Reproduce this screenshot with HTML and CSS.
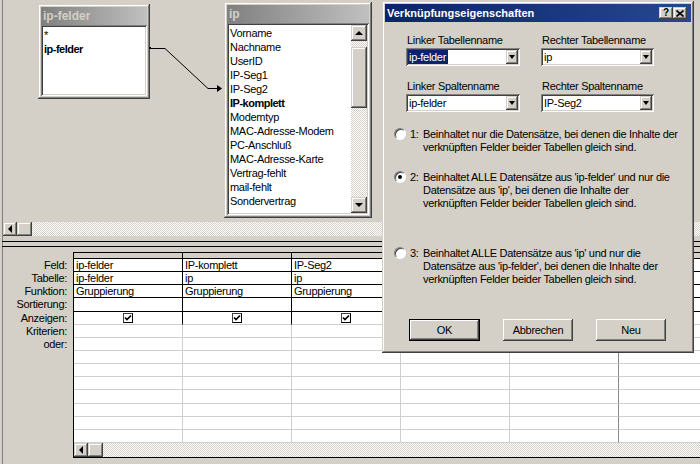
FILE: index.html
```html
<!DOCTYPE html>
<html>
<head>
<meta charset="utf-8">
<title>Abfrage</title>
<link rel="stylesheet" href="styles.css">
</head>
<body>
<div class="app">
  <div class="upper">
    <div class="canvas">
      <div class="tbl tbl-felder">
        <div class="tbl-title">ip-felder</div>
        <div class="tbl-list">
          <div class="fld">*</div>
          <div class="fld b">ip-felder</div>
        </div>
      </div>
      <svg class="link" width="230" height="100" viewBox="0 0 230 100">
        <rect x="149" y="47" width="2" height="2" fill="#000"/>
        <path d="M150 48.5 H165 L208 88.5 H218" fill="none" stroke="#000" stroke-width="1"/>
        <polygon points="217,85 222,88.5 217,92" fill="#000"/>
      </svg>
      <div class="tbl tbl-ip">
        <div class="tbl-title">ip</div>
        <div class="tbl-body">
          <div class="tbl-list">
            <div class="fld">Vorname</div>
            <div class="fld">Nachname</div>
            <div class="fld">UserID</div>
            <div class="fld">IP-Seg1</div>
            <div class="fld">IP-Seg2</div>
            <div class="fld b">IP-komplett</div>
            <div class="fld">Modemtyp</div>
            <div class="fld">MAC-Adresse-Modem</div>
            <div class="fld">PC-Anschluß</div>
            <div class="fld">MAC-Adresse-Karte</div>
            <div class="fld">Vertrag-fehlt</div>
            <div class="fld">mail-fehlt</div>
            <div class="fld">Sondervertrag</div>
          </div>
          <div class="vscroll">
            <div class="sbtn sq"><span class="tri-up"></span></div>
            <div class="vtrack"><div class="vthumb"></div></div>
            <div class="sbtn sq"><span class="tri-down"></span></div>
          </div>
        </div>
      </div>
    </div>
    <div class="hscroll up-h">
      <div class="sbtn"><span class="tri-left"></span></div>
      <div class="hthumb"></div>
      <div class="htrack"></div>
    </div>
  </div>

  <div class="splitter"><div class="sline"></div><div class="sline gap"></div></div>

  <div class="lower">
    <div class="labels">
      <div class="lab">Feld:</div>
      <div class="lab">Tabelle:</div>
      <div class="lab">Funktion:</div>
      <div class="lab">Sortierung:</div>
      <div class="lab">Anzeigen:</div>
      <div class="lab">Kriterien:</div>
      <div class="lab">oder:</div>
    </div>
    <div class="qgrid">
      <div class="cells">
        <div class="c hd"></div><div class="c hd"></div><div class="c hd"></div><div class="c hd"></div><div class="c hd"></div><div class="c hd"></div>

        <div class="c k">ip-felder</div><div class="c k">IP-komplett</div><div class="c k">IP-Seg2</div><div class="c k"></div><div class="c k"></div><div class="c k"></div>
        <div class="c k">ip-felder</div><div class="c k">ip</div><div class="c k">ip</div><div class="c k"></div><div class="c k"></div><div class="c k"></div>
        <div class="c k">Gruppierung</div><div class="c k">Gruppierung</div><div class="c k">Gruppierung</div><div class="c k"></div><div class="c k"></div><div class="c k"></div>
        <div class="c k"></div><div class="c k"></div><div class="c k"></div><div class="c k"></div><div class="c k"></div><div class="c k"></div>
        <div class="c k5 ck"><span class="chk"><svg width="8" height="8" viewBox="0 0 8 8"><path d="M1 3.5 L3 5.5 L7 1.5" fill="none" stroke="#000" stroke-width="1.7"/></svg></span></div>
        <div class="c k5 ck"><span class="chk"><svg width="8" height="8" viewBox="0 0 8 8"><path d="M1 3.5 L3 5.5 L7 1.5" fill="none" stroke="#000" stroke-width="1.7"/></svg></span></div>
        <div class="c k5 ck"><span class="chk"><svg width="8" height="8" viewBox="0 0 8 8"><path d="M1 3.5 L3 5.5 L7 1.5" fill="none" stroke="#000" stroke-width="1.7"/></svg></span></div>
        <div class="c k5"></div><div class="c k5"></div><div class="c k5"></div>

        <div class="c"></div><div class="c"></div><div class="c"></div><div class="c"></div><div class="c c5"></div><div class="c"></div>
        <div class="c"></div><div class="c"></div><div class="c"></div><div class="c"></div><div class="c c5"></div><div class="c"></div>
        <div class="c"></div><div class="c"></div><div class="c"></div><div class="c"></div><div class="c c5"></div><div class="c"></div>
        <div class="c"></div><div class="c"></div><div class="c"></div><div class="c"></div><div class="c c5"></div><div class="c"></div>
        <div class="c"></div><div class="c"></div><div class="c"></div><div class="c"></div><div class="c c5"></div><div class="c"></div>
        <div class="c"></div><div class="c"></div><div class="c"></div><div class="c"></div><div class="c c5"></div><div class="c"></div>
        <div class="c"></div><div class="c"></div><div class="c"></div><div class="c"></div><div class="c c5"></div><div class="c"></div>
        <div class="c"></div><div class="c"></div><div class="c"></div><div class="c"></div><div class="c c5"></div><div class="c"></div>
        <div class="c"></div><div class="c"></div><div class="c"></div><div class="c"></div><div class="c c5"></div><div class="c"></div>
      </div>
      <div class="hscroll">
        <div class="sbtn"><span class="tri-left"></span></div>
        <div class="hthumb"></div>
        <div class="htrack"></div>
      </div>
    </div>
  </div>

  <div class="dialog">
    <div class="titlebar">
      <span class="title">Verknüpfungseigenschaften</span>
      <div class="capbtns">
        <span class="capbtn">?</span>
        <span class="capbtn"><svg width="8" height="7" viewBox="0 0 8 7"><path d="M0.5 0.5 L7.5 6.5 M7.5 0.5 L0.5 6.5" stroke="#000" stroke-width="1.6" fill="none"/></svg></span>
      </div>
    </div>
    <div class="dlg-body">
      <div class="combos">
        <div class="cgroup">
          <div class="clabel">Linker Tabellenname</div>
          <div class="combo"><span class="cval sel">ip-felder</span><span class="dd"><span class="tri-down"></span></span></div>
        </div>
        <div class="cgroup">
          <div class="clabel">Rechter Tabellenname</div>
          <div class="combo"><span class="cval">ip</span><span class="dd"><span class="tri-down"></span></span></div>
        </div>
        <div class="cgroup">
          <div class="clabel">Linker Spaltenname</div>
          <div class="combo"><span class="cval">ip-felder</span><span class="dd"><span class="tri-down"></span></span></div>
        </div>
        <div class="cgroup">
          <div class="clabel">Rechter Spaltenname</div>
          <div class="combo"><span class="cval">IP-Seg2</span><span class="dd"><span class="tri-down"></span></span></div>
        </div>
      </div>
      <div class="options">
        <div class="opt o1">
          <span class="radio"></span><span class="onum">1:</span>
          <span class="otext">Beinhaltet nur die Datensätze, bei denen die Inhalte der<br>verknüpften Felder beider Tabellen gleich sind.</span>
        </div>
        <div class="opt o2">
          <span class="radio on"></span><span class="onum">2:</span>
          <span class="otext">Beinhaltet ALLE Datensätze aus 'ip-felder' und nur die<br>Datensätze aus 'ip', bei denen die Inhalte der<br>verknüpften Felder beider Tabellen gleich sind.</span>
        </div>
        <div class="opt o3">
          <span class="radio"></span><span class="onum">3:</span>
          <span class="otext">Beinhaltet ALLE Datensätze aus 'ip' und nur die<br>Datensätze aus 'ip-felder', bei denen die Inhalte der<br>verknüpften Felder beider Tabellen gleich sind.</span>
        </div>
      </div>
      <div class="buttons">
        <span class="btn def">OK</span>
        <span class="btn">Abbrechen</span>
        <span class="btn">Neu</span>
      </div>
    </div>
  </div>
</div>
</body>
</html>
```

FILE: styles.css
```css
* { box-sizing: border-box; }
html, body { margin: 0; padding: 0; }
body {
  width: 700px;
  height: 464px;
  overflow: hidden;
  background: #d4d0c8;
  font-family: "Liberation Sans", Arial, sans-serif;
  font-size: 11px;
  letter-spacing: -0.3px;
  color: #000;
}
.app {
  position: relative;
  width: 700px;
  height: 464px;
  overflow: hidden;
  background: linear-gradient(to right, #d4d0c8 2px, #808080 2px, #808080 3px, #d4d0c8 3px);
}

/* ---------- shared 3D pieces ---------- */
.sbtn, .hthumb, .vthumb, .dd, .capbtn {
  background: #d4d0c8;
  box-shadow: inset -1px -1px #404040, inset 1px 1px #d4d0c8, inset -2px -2px #808080, inset 2px 2px #fff;
}
.sbtn { width: 14px; height: 14px; display: flex; align-items: center; justify-content: center; flex: none; }
.sbtn.sq { width: 16px; height: 16px; }
.tri-left { width: 0; height: 0; border-top: 4px solid transparent; border-bottom: 4px solid transparent; border-right: 4px solid #000; margin-left: -1px; }
.tri-up { width: 0; height: 0; border-left: 4px solid transparent; border-right: 4px solid transparent; border-bottom: 4px solid #000; margin-top: -1px; }
.tri-down { width: 0; height: 0; border-left: 4px solid transparent; border-right: 4px solid transparent; border-top: 4px solid #000; }
.htrack, .vtrack {
  background-image: repeating-conic-gradient(#fff 0% 25%, #d4d0c8 0% 50%);
  background-size: 2px 2px;
}

/* ---------- upper pane ---------- */
.upper { height: 236px; display: flex; flex-direction: column; }
.canvas { position: relative; height: 222px; }
.hscroll { display: flex; height: 14px; flex: none; }
.up-h { margin-left: 3px; }
.hthumb { width: 15px; height: 14px; flex: none; }
.htrack { flex: 1; }

.tbl {
  position: absolute;
  background: #d4d0c8;
  padding: 3px;
  display: flex;
  flex-direction: column;
  box-shadow: inset -1px -1px #404040, inset 1px 1px #d4d0c8, inset -2px -2px #808080, inset 2px 2px #fff;
}
.tbl-felder { left: 38px; top: 4px; width: 112px; height: 95px; }
.tbl-ip { left: 224px; top: 2px; width: 148px; height: 216px; }
.tbl-title {
  height: 18px;
  flex: none;
  line-height: 18px;
  padding-left: 2px;
  font-weight: bold;
  font-size: 12px;
  letter-spacing: 0;
  color: #d4d0c8;
  background: linear-gradient(to right, #808080, #c0c0c0);
}
.tbl-list {
  flex: 1;
  background: #fff;
  padding: 3px 0 0 3px;
  overflow: hidden;
}
.tbl-felder .tbl-list {
  box-shadow: inset 1px 1px #808080, inset -1px -1px #fff, inset 2px 2px #404040, inset -2px -2px #d4d0c8;
}
.fld { height: 14px; line-height: 14px; white-space: nowrap; }
.fld.b { font-weight: bold; letter-spacing: -0.5px; }
.tbl-body {
  flex: 1;
  display: flex;
  padding: 2px;
  background: #fff;
  box-shadow: inset 1px 1px #808080, inset -1px -1px #fff, inset 2px 2px #404040, inset -2px -2px #d4d0c8;
}
.tbl-body .tbl-list { padding: 1px 0 0 1px; }
.vscroll { width: 16px; display: flex; flex-direction: column; flex: none; }
.vtrack { flex: 1; padding-top: 6px; }
.vthumb { height: 61px; }
.link { position: absolute; left: 0; top: 0; }

/* ---------- splitter ---------- */
.splitter { height: 16px; padding-top: 5px; margin-left: 2px; }
.sline { height: 1px; background: #000; }
.sline.gap { margin-top: 4px; }

/* ---------- lower pane ---------- */
.lower { display: flex; height: 212px; }
.labels { width: 73px; flex: none; padding-top: 7px; padding-right: 6px; text-align: right; }
.lab { height: 13.15px; line-height: 12px; white-space: nowrap; }
.qgrid {
  width: 627px;
  flex: none;
  border-top: 1px solid #000;
  border-left: 1px solid #000;
  border-bottom: 1px solid #000;
  align-self: flex-start;
  display: flex;
  flex-direction: column;
  overflow: hidden;
}
.cells {
  display: grid;
  grid-template-columns: repeat(6, 109px);
  grid-template-rows: 6px repeat(14, 13.15px);
  background: #fff;
}
.c {
  border-right: 1px solid #cfcfcf;
  border-bottom: 1px solid #cfcfcf;
  padding-left: 2px;
  line-height: 12px;
  white-space: nowrap;
  overflow: hidden;
}
.c.hd { background: #d4d0c8; border-color: #000; }
.c.k { border-color: #000; }
.c.k5 { border-right-color: #000; }
.c.c5 { border-right-color: #8a8a8a; }
.ck { display: flex; align-items: center; justify-content: center; padding-left: 0; }
.chk {
  width: 10px;
  height: 10px;
  background: #fff;
  border: 1px solid #000;
  border-top-color: #404040;
  border-left-color: #404040;
  display: flex;
  align-items: center;
  justify-content: center;
}
.qgrid .hscroll .sbtn { width: 14px; }

/* ---------- dialog ---------- */
.dialog {
  position: absolute;
  left: 382px;
  top: 1px;
  width: 312px;
  height: 352px;
  padding: 3px;
  background: #d4d0c8;
  box-shadow: inset -1px -1px #404040, inset 1px 1px #d4d0c8, inset -2px -2px #808080, inset 2px 2px #fff;
}
.titlebar {
  height: 18px;
  display: flex;
  align-items: center;
  padding: 0 4px 0 2px;
  background: linear-gradient(to right, #0a246a, #26478f);
}
.title { color: #fff; font-weight: bold; letter-spacing: 0; }
.capbtns { margin-left: auto; display: flex; }
.capbtn {
  width: 14px;
  height: 12px;
  display: flex;
  align-items: center;
  justify-content: center;
  font-weight: bold;
  font-size: 10px;
  letter-spacing: 0;
  line-height: 12px;
}
.dlg-body { padding: 11px 0 0 0; }
.combos {
  display: grid;
  grid-template-columns: 114px 113px;
  column-gap: 21px;
  row-gap: 13px;
  padding-left: 21px;
}
.clabel { height: 14px; line-height: 14px; padding-left: 1px; margin-bottom: 1px; white-space: nowrap; }
.combo {
  height: 18px;
  padding: 2px;
  background: #fff;
  display: flex;
  box-shadow: inset 1px 1px #808080, inset -1px -1px #fff, inset 2px 2px #404040, inset -2px -2px #d4d0c8;
}
.cval { height: 14px; line-height: 14px; padding: 0 2px 0 1px; white-space: nowrap; }
.cval.sel { background: #0a246a; color: #fff; }
.dd { margin-left: auto; width: 12px; height: 14px; display: flex; align-items: center; justify-content: center; }
.dd .tri-down { border-left-width: 3.5px; border-right-width: 3.5px; border-top-width: 4px; }

.options { padding-left: 9px; margin-top: 16px; }
.opt { display: flex; align-items: flex-start; line-height: 13px; }
.o2 { margin-top: 17px; }
.o3 { margin-top: 37px; }
.radio {
  width: 12px;
  height: 12px;
  flex: none;
  border-radius: 50%;
  background: #fff;
  border: 1px solid;
  border-color: #808080 #fff #fff #808080;
  box-shadow: inset 1px 1px #404040;
  position: relative;
}
.radio.on::after {
  content: "";
  position: absolute;
  left: 3px;
  top: 3px;
  width: 4px;
  height: 4px;
  border-radius: 50%;
  background: #000;
}
.onum { width: 13px; margin-left: 4px; flex: none; }
.otext { white-space: nowrap; }

.buttons { display: flex; padding-left: 24px; margin-top: 33px; gap: 23px; }
.btn {
  width: 70px;
  height: 22px;
  display: flex;
  align-items: center;
  justify-content: center;
  background: #d4d0c8;
  box-shadow: inset -1px -1px #404040, inset 1px 1px #fff, inset -2px -2px #808080, inset 2px 2px #d4d0c8;
}
.btn.def {
  width: 71px;
  box-shadow: inset 0 0 0 1px #000, inset -2px -2px #404040, inset 2px 2px #fff, inset -3px -3px #808080;
}
```
